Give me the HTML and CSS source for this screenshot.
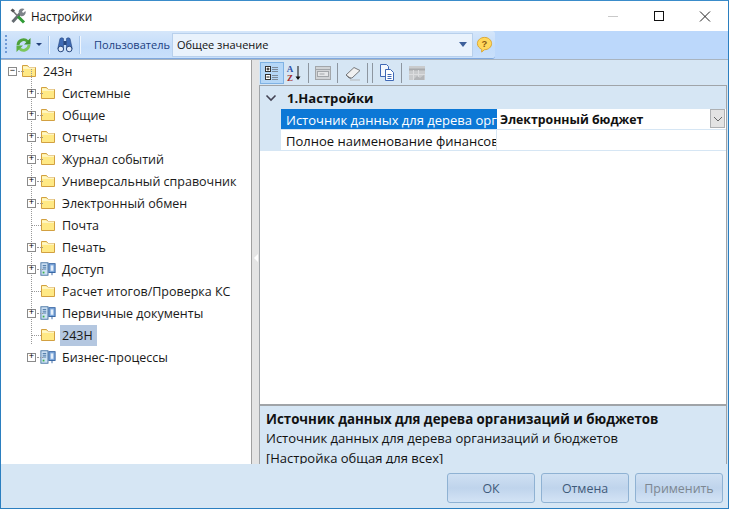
FILE: index.html
```html
<!DOCTYPE html>
<html lang="ru">
<head>
<meta charset="utf-8">
<title>Настройки</title>
<link rel="stylesheet" href="styles.css">
</head>
<body>
<svg class="defs" width="0" height="0">
  <symbol id="folder" viewBox="0 0 16 16">
    <path d="M1.500 13.500V2.500h5l1.500 2h6.500v9z" fill="#fff3a8" stroke="#d2a041"/>
    <path d="M2 5.500h12v7.500H2z" fill="#ffe985"/>
    <path d="M2 5h12" stroke="#fffbe6" fill="none"/>
  </symbol>
  <symbol id="book" viewBox="0 0 18 16">
    <rect x="1" y="1" width="8" height="14" fill="#cfe2f5" stroke="#3f6f9f"/>
    <path d="M3 4h4M3 6h4M3 8h4" stroke="#3f6f9f"/>
    <rect x="3" y="11" width="2" height="2" fill="#3cb04a"/>
    <rect x="10" y="2" width="7" height="10" fill="#7fa9dc" stroke="#2f5f9f"/>
    <rect x="12" y="4" width="3" height="6" fill="#e6f0fa"/>
    <path d="M13.500 12v3" stroke="#2f5f9f"/>
  </symbol>
</svg>
<div class="window">
  <header class="titlebar">
    <svg class="title-icon" width="16" height="16" viewBox="0 0 16 16">
      <path d="M2.500 14L11 4.500" stroke="#666c72" stroke-width="3"/>
      <path d="M8.500 4a4 4 0 0 1 6-3l-2.500 2.500 1 1.500 2.500-2a4 4 0 0 1-5 5z" fill="#7d8389"/>
      <path d="M3 3l5 5.500" stroke="#777" stroke-width="1.500"/>
      <path d="M8 8.500l6 6" stroke="#2f9a34" stroke-width="3"/>
      <path d="M.5 2.500l2-2 2.500 2-2 2z" fill="#555"/>
    </svg>
    <span class="title-text">Настройки</span>
    <div class="win-buttons">
      <svg width="46" height="31" viewBox="0 0 46 31"><path d="M18 15.500h10" stroke="#c9c9c9"/></svg>
      <svg width="46" height="31" viewBox="0 0 46 31"><rect x="18.500" y="10.500" width="9" height="9" fill="none" stroke="#111"/></svg>
      <svg width="46" height="31" viewBox="0 0 46 31"><path d="M18 10.500l10 10M28 10.500l-10 10" stroke="#222" fill="none"/></svg>
    </div>
  </header>

  <div class="toolbar">
    <div class="toolstrip">
      <span class="grip"></span>
      <svg class="tb-refresh" width="17" height="16" viewBox="0 0 17 16">
        <path d="M3 8a5.500 5.500 0 0 1 9.500-3.500" fill="none" stroke="#4ea23a" stroke-width="2.800"/>
        <path d="M15.500 1v6.500H9z" fill="#3f9430"/>
        <path d="M14 8a5.500 5.500 0 0 1-9.500 3.500" fill="none" stroke="#7cc75c" stroke-width="2.800"/>
        <path d="M1.500 15V8.500H8z" fill="#5cb043"/>
      </svg>
      <span class="caret"></span>
      <span class="sep"></span>
      <svg class="tb-bino" width="16" height="17" viewBox="0 0 16 17">
        <path d="M.8 12.500L3 2.500q2-1.500 3.500 0v10zM9.500 12.500v-10q1.500-1.500 3.500 0l2.200 10z" fill="#3f6bb5" stroke="#27477f" stroke-width=".6"/>
        <path d="M6.500 5h3v4h-3z" fill="#27477f"/>
        <circle cx="3.800" cy="13" r="2.800" fill="#dfe9f7" stroke="#27477f"/>
        <circle cx="12.200" cy="13" r="2.800" fill="#dfe9f7" stroke="#27477f"/>
      </svg>
      <span class="sep"></span>
      <span class="user-label">Пользователь</span>
      <div class="user-combo">
        <span>Общее значение</span>
        <span class="combo-caret"></span>
      </div>
      <svg class="tb-help" width="17" height="17" viewBox="0 0 18 18">
        <path d="M9 1.500c4.200 0 7.500 2.800 7.500 6.500S13.200 14.500 9 14.500L6 17v-3C3.500 13 1.500 10.800 1.500 8 1.500 4.300 4.800 1.500 9 1.500z" fill="#ffd85c" stroke="#dca42c"/>
        <text x="9" y="12" class="help-mark">?</text>
      </svg>
    </div>
  </div>

  <main class="content">
    <nav class="tree">
      <div class="row root"><span class="box">−</span><svg class="ico"><use href="#folder"/></svg><span class="label">243н</span></div>
      <div class="children">
        <div class="row"><span class="box">+</span><svg class="ico"><use href="#folder"/></svg><span class="label">Системные</span></div>
        <div class="row"><span class="box">+</span><svg class="ico"><use href="#folder"/></svg><span class="label">Общие</span></div>
        <div class="row"><span class="box">+</span><svg class="ico"><use href="#folder"/></svg><span class="label">Отчеты</span></div>
        <div class="row"><span class="box">+</span><svg class="ico"><use href="#folder"/></svg><span class="label">Журнал событий</span></div>
        <div class="row"><span class="box">+</span><svg class="ico"><use href="#folder"/></svg><span class="label">Универсальный справочник</span></div>
        <div class="row"><span class="box">+</span><svg class="ico"><use href="#folder"/></svg><span class="label">Электронный обмен</span></div>
        <div class="row"><span class="nobox"></span><svg class="ico"><use href="#folder"/></svg><span class="label">Почта</span></div>
        <div class="row"><span class="box">+</span><svg class="ico"><use href="#folder"/></svg><span class="label">Печать</span></div>
        <div class="row"><span class="box">+</span><svg class="ico"><use href="#book"/></svg><span class="label">Доступ</span></div>
        <div class="row"><span class="nobox"></span><svg class="ico"><use href="#folder"/></svg><span class="label">Расчет итогов/Проверка КС</span></div>
        <div class="row"><span class="box">+</span><svg class="ico"><use href="#book"/></svg><span class="label">Первичные документы</span></div>
        <div class="row"><span class="nobox"></span><svg class="ico"><use href="#folder"/></svg><span class="label selected">243Н</span></div>
        <div class="row"><span class="box">+</span><svg class="ico"><use href="#book"/></svg><span class="label">Бизнес-процессы</span></div>
      </div>
    </nav>
    <div class="splitter"><span class="split-arrow"></span></div>
    <section class="props">
      <div class="props-toolbar">
        <span class="pt-btn w24 active">
          <svg width="18" height="18" viewBox="0 0 18 18">
            <rect x="2.500" y="2.500" width="5" height="5" fill="#fff" stroke="#333"/><path d="M3.500 5h3M5 3.500v3" stroke="#111"/>
            <rect x="2.500" y="10.500" width="5" height="5" fill="#fff" stroke="#333"/><path d="M3.500 13h3" stroke="#111"/>
            <path d="M9 3.500h6M9 5.500h6M9 7.500h6M9 11.500h6M9 13.500h6M9 15.500h6" stroke="#7d8a99"/>
          </svg>
        </span>
        <span class="pt-btn w21">
          <svg width="18" height="18" viewBox="0 0 18 18">
            <text x="4" y="8" class="az a">A</text><text x="4" y="16.500" class="az z">Z</text>
            <path d="M12 2v13" stroke="#111"/><path d="M9.500 12.500h5L12 16z" fill="#111"/>
          </svg>
        </span>
        <span class="pt-sep"></span>
        <span class="pt-btn w22">
          <svg width="18" height="18" viewBox="0 0 18 18">
            <rect x="1.500" y="2.500" width="15" height="13" fill="#d0d3d6" stroke="#a2a6aa"/>
            <path d="M1.500 5.500h15" stroke="#a2a6aa"/>
            <rect x="3.500" y="7.500" width="11" height="5" fill="#e4e6e8" stroke="#a2a6aa"/>
            <path d="M5.500 10h5" stroke="#a2a6aa"/>
          </svg>
        </span>
        <span class="pt-sep"></span>
        <span class="pt-btn w23">
          <svg width="18" height="18" viewBox="0 0 18 18">
            <path d="M2 11l8-7.500 6 3-8 7.500H5z" fill="#f1f1f1" stroke="#77797c"/>
            <path d="M2 11l5 3.500" stroke="#77797c" fill="none"/>
            <path d="M6 16h10" stroke="#b5b7b9"/>
          </svg>
        </span>
        <span class="pt-sep"></span>
        <span class="pt-sep tight"></span>
        <span class="pt-btn w22">
          <svg width="18" height="18" viewBox="0 0 18 18">
            <path d="M2.500 .5h6l2 2v10h-8z" fill="#f4f8fd" stroke="#3f68b5"/>
            <path d="M7.500 5.500h5l3 3v8h-8z" fill="#fff" stroke="#3f68b5"/>
            <path d="M9.500 10.500h4M9.500 12.500h4M9.500 14.500h4" stroke="#3f68b5"/>
          </svg>
        </span>
        <span class="pt-sep"></span>
        <span class="pt-btn w24">
          <svg width="18" height="18" viewBox="0 0 18 18">
            <rect x="1" y="2" width="16" height="14" fill="#c9cbcd"/>
            <path d="M1 5.500h16" stroke="#a8aaad" stroke-width="2"/>
            <path d="M5.500 6v10M10.500 6v10M1 10.500h16" stroke="#dcdddf"/>
            <path d="M6 15l3-3 3 2 4-3v5H6z" fill="#b3b5b8"/>
          </svg>
        </span>
      </div>
      <div class="grid">
        <div class="category">
          <svg class="chev" width="12" height="8" viewBox="0 0 12 8"><path d="M1.500 1.500L6 6l4.500-4.500" fill="none" stroke="#445" stroke-width="1.600"/></svg>
          <span>1.Настройки</span>
        </div>
        <div class="prop-row">
          <span class="gutter"></span>
          <span class="prop-name selected-name">Источник данных для дерева организаций и бюджетов</span>
          <span class="prop-value bold">Электронный бюджет<span class="value-btn"><svg width="10" height="6" viewBox="0 0 10 6"><path d="M1 1l4 4 4-4" fill="none" stroke="#666"/></svg></span></span>
        </div>
        <div class="prop-row">
          <span class="gutter"></span>
          <span class="prop-name">Полное наименование финансового органа</span>
          <span class="prop-value"></span>
        </div>
      </div>
      <div class="desc">
        <div class="desc-title">Источник данных для дерева организаций и бюджетов</div>
        <div class="desc-text">Источник данных для дерева организаций и бюджетов</div>
        <div class="desc-text last">[Настройка общая для всех]</div>
      </div>
    </section>
  </main>

  <footer class="footer">
    <button class="btn">ОК</button>
    <button class="btn">Отмена</button>
    <button class="btn disabled">Применить</button>
  </footer>
</div>
</body>
</html>
```

FILE: styles.css
```css
* { box-sizing: border-box; }
html, body { margin: 0; padding: 0; }
body {
  width: 729px;
  height: 509px;
  overflow: hidden;
  font-family: "Open Sans", "Noto Sans", sans-serif;
  font-size: 12px;
  color: #111;
}
.defs { position: absolute; }
.window {
  width: 729px;
  height: 509px;
  display: flex;
  flex-direction: column;
  border: 1px solid #2b7fc0;
  border-top-color: #3a8cca;
  background: #fff;
}
.titlebar {
  height: 30px;
  flex: none;
  display: flex;
  align-items: center;
  padding-left: 9px;
  background: #fff;
}
.title-icon { margin-right: 5px; }
.title-text { font-size: 11.7px; color: #111; }
.win-buttons { margin-left: auto; display: flex; }
.win-buttons svg { display: block; }

.toolbar {
  height: 29px;
  flex: none;
  background: #bcd8fb;
  border-bottom: 1px solid #a9b4bf;
}
.toolstrip {
  width: 494px;
  height: 28px;
  display: flex;
  align-items: center;
  background: linear-gradient(#d5e6fa, #c3dcfa 60%, #c9e0fb);
  border-bottom: 1px solid #7fa8de;
  border-radius: 0 3px 3px 0;
  padding-left: 4px;
}
.grip {
  width: 2px;
  height: 20px;
  background: repeating-linear-gradient(#6f9ad6 0 2px, transparent 2px 4px);
  margin-right: 8px;
}
.caret {
  width: 0; height: 0;
  border-left: 3px solid transparent;
  border-right: 3px solid transparent;
  border-top: 3px solid #24417a;
  margin-left: 4px;
}
.sep { height: 18px; background: #f0f6fd; border-left: 1px solid #a9c7eb; width: 2px; margin: 0 7px 0 6px; }
.user-label { color: #20407f; margin-left: 6px; margin-right: 2px; font-size: 11px; }
.user-combo {
  width: 301px;
  height: 24px;
  display: flex;
  align-items: center;
  justify-content: space-between;
  padding: 0 5px 0 4px;
  background: #e9f2fc;
  border: 1px solid #b8d0ec;
  font-size: 11px;
}
.combo-caret {
  width: 0; height: 0;
  border-left: 4px solid transparent;
  border-right: 4px solid transparent;
  border-top: 5px solid #3d5f9a;
}
.tb-help { margin-left: 3px; }
.help-mark { font: bold 10px "Liberation Sans", sans-serif; fill: #8a5a10; text-anchor: middle; }

.content {
  flex: 1;
  min-height: 0;
  display: flex;
  background: #fff;
}
.tree {
  width: 251px;
  flex: none;
  background: #fff;
  font-size: 12.5px;
  border-right: 1px solid #a0a0a0;
}
.row {
  height: 22px;
  display: flex;
  align-items: center;
  position: relative;
  padding-left: 26px;
}
.root { padding-left: 7px; }
.children { position: relative; }
.children::before {
  content: "";
  position: absolute;
  left: 30px;
  top: -13px;
  height: 275px;
  border-left: 1px dotted #999;
}
.box {
  width: 9px;
  height: 9px;
  border: 1px solid #8a8a8a;
  background: #fff;
  display: flex;
  align-items: center;
  justify-content: center;
  font: 9px/1 "Liberation Mono", monospace;
  color: #000;
  position: relative;
  z-index: 1;
  flex: none;
}
.nobox { width: 9px; flex: none; }
.box::after, .nobox::after {
  content: "";
  position: absolute;
  left: 9px;
  width: 6px;
  border-top: 1px dotted #999;
}
.nobox::after { left: 31px; width: 9px; }
.ico { width: 16px; height: 16px; margin-left: 4px; flex: none; }
.label { margin-left: 4px; padding: 0 4px 0 2px; height: 21px; line-height: 21px; white-space: nowrap; color: #1a1a1a; }
.selected { background: #b4c7e0; }

.splitter {
  width: 7px;
  flex: none;
  background: #e4e4e4;
  display: flex;
  align-items: center;
  justify-content: center;
  padding-bottom: 8px;
}
.split-arrow {
  width: 0; height: 0;
  border-top: 4px solid transparent;
  border-bottom: 4px solid transparent;
  border-right: 4px solid #fff;
}

.props {
  flex: 1;
  min-width: 0;
  display: flex;
  flex-direction: column;
  background: #d6e6f4;
  padding-right: 1px;
}
.props-toolbar {
  height: 25px;
  flex: none;
  display: flex;
  align-items: center;
  background: #d6e6f4;
  padding: 2px 0 1px 1px;
}
.pt-btn {
  height: 22px;
  display: flex;
  align-items: center;
  justify-content: center;
}
.w24 { width: 24px; }
.w23 { width: 23px; }
.w22 { width: 22px; }
.w21 { width: 21px; }
.pt-btn svg { display: block; }
.pt-btn.active { background: #b5d7f7; border: 1px solid #7fb2e4; }
.pt-sep { width: 1px; height: 20px; background: #8d96a0; margin: 0 3px; }
.pt-sep.tight { margin-left: 1px; }
.az { font: bold 9px "Liberation Serif", serif; text-anchor: middle; }
.a { fill: #2b4fa5; }
.z { fill: #a52b2b; }

.grid {
  flex: 1;
  min-height: 0;
  border: 1px solid #a0a4a8;
  background: #fff;
}
.category {
  height: 23px;
  display: flex;
  align-items: center;
  background: #d6e6f4;
  font-weight: 700;
  font-size: 13.1px;
  color: #111;
  padding: 1px 0 0 5px;
}
.chev { margin-right: 10px; }
.prop-row {
  height: 21px;
  display: flex;
  font-size: 13px;
  border-bottom: 1px solid #d6e6f4;
}
.gutter { width: 21px; flex: none; background: #d6e6f4; }
.prop-name {
  width: 216px;
  flex: none;
  padding-left: 5px;
  line-height: 22px;
  overflow: hidden;
  white-space: nowrap;
  border-right: 1px solid #d6e6f4;
}
.selected-name { background: #0c78d6; color: #fff; border-right: 0; }
.prop-value { flex: 1; position: relative; padding-left: 3px; line-height: 22px; }
.bold { font-weight: 700; font-size: 12.3px; }
.value-btn {
  position: absolute;
  right: 1px;
  top: 0;
  width: 15px;
  height: 19px;
  display: flex;
  align-items: center;
  justify-content: center;
  background: #e3e3e3;
  border: 1px solid #aeb0b2;
}
.desc {
  height: 59px;
  flex: none;
  overflow: hidden;
  background: #d6e6f4;
  border-left: 1px solid #a0a4a8;
  border-right: 1px solid #a0a4a8;
  border-top: 1px solid #a0a4a8;
  padding: 3px 6px;
}
.desc-title { font-weight: 700; font-size: 13.3px; line-height: 20px; }
.desc-text { line-height: 19px; font-size: 13px; }
.desc-text.last { line-height: 21px; }

.footer {
  height: 44px;
  flex: none;
  display: flex;
  justify-content: flex-end;
  align-items: flex-start;
  gap: 6px;
  padding: 9px 5px 0 0;
  background: #d6e6f4;
}
.btn {
  width: 88px;
  height: 30px;
  border: 1px solid #8fb2d3;
  border-radius: 3px;
  background: linear-gradient(#cfe0f3, #bfd4ec 50%, #d3e3f5);
  font: 12.4px "Open Sans", "Noto Sans", sans-serif;
  color: #3f5a7a;
  padding: 0;
}
.btn.disabled { color: #7d8791; }
```
